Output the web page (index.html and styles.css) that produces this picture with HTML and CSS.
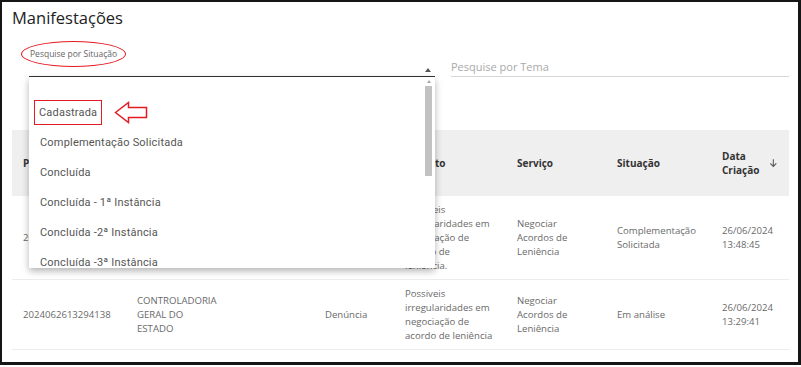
FILE: index.html
```html
<!DOCTYPE html>
<html lang="pt-BR">
<head>
    <meta charset="UTF-8">
    <title>Manifestações</title>
    <link rel="stylesheet" href="styles.css">
</head>
<body>
<div class="frame">
    <h1 class="page-title">Manifestações</h1>

    <div class="filters">
        <div class="field situacao">
            <label class="field-label marked">Pesquise por Situação</label>
            <div class="select">
                <span class="select-arrow"></span>
            </div>
            <div class="dropdown">
                <ul class="options">
                    <li><span class="marked-box">Cadastrada</span>
                        <svg class="hint-arrow" width="34" height="23" viewBox="0 0 34 23">
                            <path d="M1.5 11.5 L14.5 1.5 L14.5 6.5 L32.5 6.5 L32.5 16.5 L14.5 16.5 L14.5 21.5 Z"
                                  fill="none" stroke="#e31b23" stroke-width="1.5" stroke-linejoin="miter"/>
                        </svg>
                    </li>
                    <li>Complementação Solicitada</li>
                    <li>Concluída</li>
                    <li>Concluída - 1ª Instância</li>
                    <li>Concluída -2ª Instância</li>
                    <li>Concluída -3ª Instância</li>
                </ul>
                <div class="scrollbar">
                    <span class="scroll-up"></span>
                    <span class="scroll-thumb"></span>
                </div>
            </div>
        </div>
        <div class="field tema">
            <input type="text" class="tema-input" placeholder="Pesquise por Tema">
        </div>
    </div>

    <table class="grid">
        <colgroup>
            <col style="width:114px">
            <col style="width:188px">
            <col style="width:80px">
            <col style="width:112px">
            <col style="width:100px">
            <col style="width:105px">
            <col style="width:78px">
        </colgroup>
        <thead>
        <tr>
            <th>Protocolo</th>
            <th>Órgão</th>
            <th>Tipo</th>
            <th>Assunto</th>
            <th>Serviço</th>
            <th>Situação</th>
            <th>
                <div class="sort-head">
                    <span class="sort-label">Data Criação</span>
                    <svg width="10" height="10" viewBox="0 0 10 10">
                        <path d="M5 0.5 V9 M1.5 5.5 L5 9 L8.5 5.5" fill="none" stroke="#555" stroke-width="1.2"/>
                    </svg>
                </div>
            </th>
        </tr>
        </thead>
        <tbody>
        <tr>
            <td>2024062613484522</td>
            <td class="org">CONTROLADORIA GERAL DO ESTADO</td>
            <td>Denúncia</td>
            <td class="assunto">Possiveis irregularidades em negociação de acordo de leniência.</td>
            <td>Negociar Acordos de Leniência</td>
            <td class="situ">Complementação Solicitada</td>
            <td>26/06/2024 13:48:45</td>
        </tr>
        <tr>
            <td>2024062613294138</td>
            <td class="org">CONTROLADORIA GERAL DO ESTADO</td>
            <td>Denúncia</td>
            <td class="assunto">Possiveis irregularidades em negociação de acordo de leniência</td>
            <td>Negociar Acordos de Leniência</td>
            <td class="situ">Em análise</td>
            <td>26/06/2024 13:29:41</td>
        </tr>
        </tbody>
    </table>
</div>
</body>
</html>
```

FILE: styles.css
```css
body {
    margin: 0;
    background: #fff;
    font-family: "Open Sans", Arial, sans-serif;
    color: #333;
}

.frame {
    width: 801px;
    height: 365px;
    box-sizing: border-box;
    border: 2px solid #151515;
    border-right-width: 3px;
    border-bottom-width: 3px;
    padding: 0 9px 0 10px;
    overflow: hidden;
}

.page-title {
    margin: 5px 0 0;
    font-size: 16.5px;
    line-height: 22px;
    font-weight: 400;
    color: #222;
}

.filters {
    display: flex;
    align-items: flex-end;
    margin-top: 11px;
}

.field {
    position: relative;
}

.situacao {
    width: 406px;
    margin-left: 17px;
}

.field-label {
    display: block;
    height: 26px;
    font-size: 8.5px;
    line-height: 26px;
    color: #666;
}

/* red ellipse drawn around the label */
.marked {
    display: inline-block;
    margin-left: -8px;
    padding: 0 8px;
    border: 1.5px solid #e31b23;
    border-radius: 50%;
    height: 24px;
    line-height: 24px;
}

.select {
    position: relative;
    height: 9px;
    border-bottom: 1.5px solid #333;
}

.select-arrow {
    position: absolute;
    right: 4px;
    top: 1px;
    width: 0;
    height: 0;
    border-left: 3.5px solid transparent;
    border-right: 3.5px solid transparent;
    border-bottom: 4px solid #555;
}

.dropdown {
    position: absolute;
    left: 0;
    top: 100%;
    width: 406px;
    height: 191px;
    background: #fff;
    box-shadow: 0 3px 7px rgba(0, 0, 0, 0.3);
    overflow: hidden;
    z-index: 5;
}

.options {
    list-style: none;
    margin: 0;
    padding: 20px 0 0;
}

.options li {
    display: flex;
    align-items: center;
    height: 30px;
    padding-left: 11px;
    font-family: Roboto, Arial, sans-serif;
    font-size: 11px;
    color: #555;
    letter-spacing: 0.2px;
}

.marked-box {
    margin-left: -6px;
    padding: 3px 4px;
    line-height: 17px;
    border: 1.5px solid #e31b23;
}

.hint-arrow {
    margin-left: 12px;
}

.scrollbar {
    position: absolute;
    right: 2px;
    top: 0;
    width: 8px;
    height: 100%;
}

.scroll-up {
    position: absolute;
    left: 2px;
    top: 3px;
    border-left: 2px solid transparent;
    border-right: 2px solid transparent;
    border-bottom: 3px solid #a8a8a8;
}

.scroll-thumb {
    position: absolute;
    left: 0;
    top: 9px;
    width: 7px;
    height: 90px;
    background: #c2c2c2;
}

.tema {
    flex: 1;
    margin-left: 16px;
}

.tema-input {
    display: block;
    width: 100%;
    box-sizing: border-box;
    border: none;
    border-bottom: 1px solid #d6d6d6;
    padding: 0 0 1px;
    height: 19px;
    font-family: "Open Sans", Arial, sans-serif;
    font-size: 11px;
    color: #333;
    outline: none;
}

.tema-input::placeholder {
    color: #a9a9a9;
}

.grid {
    width: 777px;
    margin-top: 53px;
    border-collapse: collapse;
    table-layout: fixed;
    font-size: 9.6px;
    line-height: 14px;
}

.grid th {
    height: 66px;
    padding: 0 11px;
    background: #efefef;
    text-align: left;
    font-size: 10px;
    font-weight: 700;
    color: #333;
}

.grid td {
    padding: 7px 11px 6px;
    text-align: left;
    vertical-align: middle;
    color: #6a6a6a;
    border-bottom: 1px solid #ececec;
}

.grid td.situ {
    padding-right: 4px;
}

.grid td.org {
    padding-right: 93px;
}

.grid td.assunto {
    padding-right: 12px;
}

.sort-head {
    display: flex;
    align-items: center;
}

.sort-label {
    width: 40px;
}

.sort-head svg {
    margin-left: 10px;
}
```
